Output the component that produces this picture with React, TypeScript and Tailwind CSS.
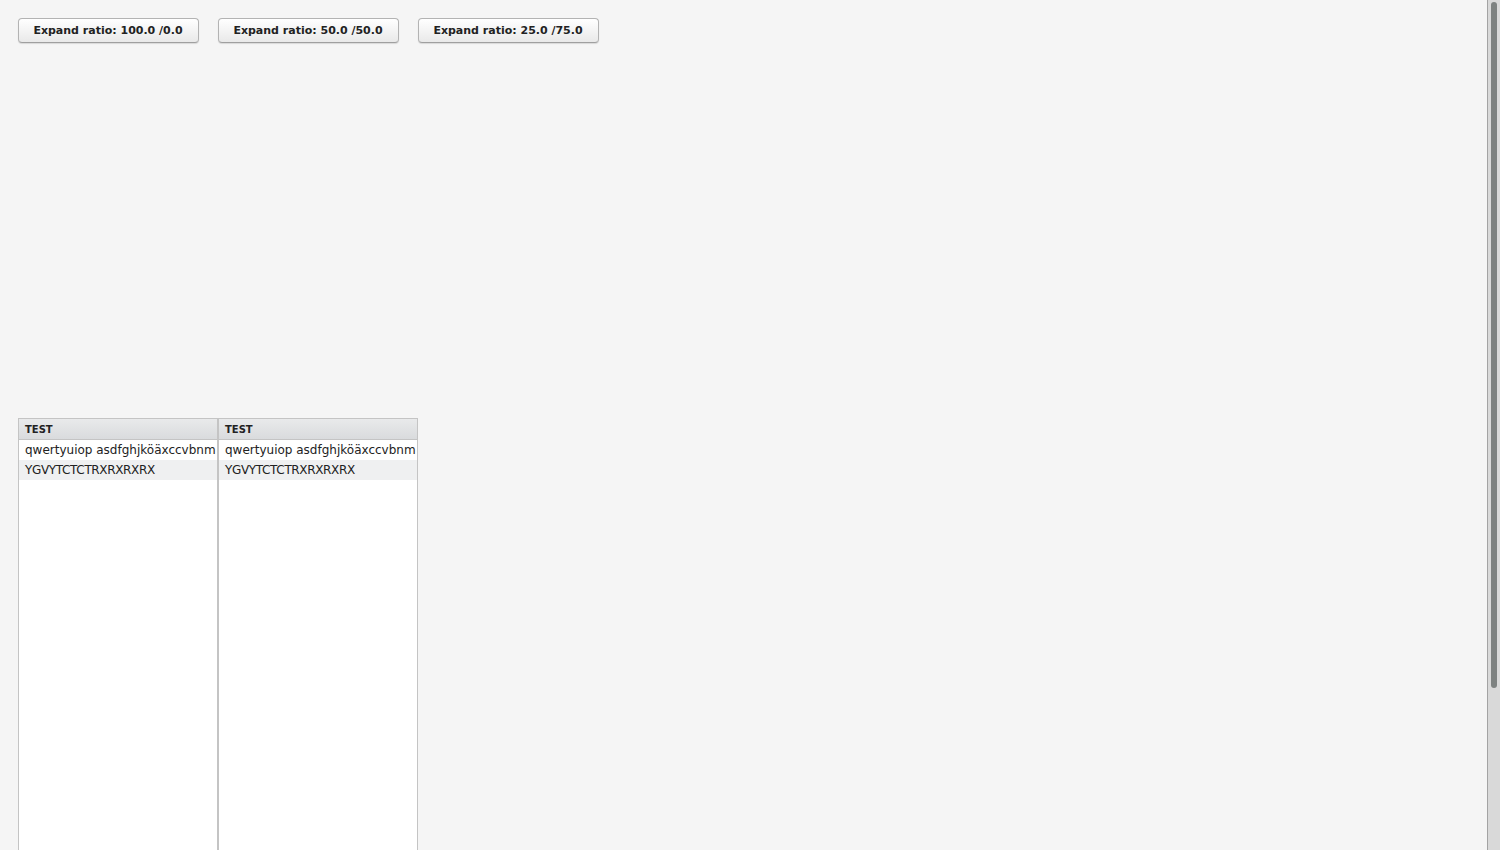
import React from "react";

const rows = [
  { text: "qwertyuiop asdfghjköäxccvbnm", cls: "bg-white" },
  { text: "YGVYTCTCTRXRXRXRX", cls: "bg-[#eff0f1] tracking-[-0.35px]" },
];

function Column({ last }: { last?: boolean }) {
  return (
    <div className={`flex flex-col ${last ? "w-[198px]" : "w-[200px] border-r-2 border-[#c4c4c4]"}`}>
      <div className="flex h-[21px] items-center border-b border-[#c4c4c4] bg-gradient-to-b from-[#e9eaeb] to-[#d9dbdd] pl-[6px] text-[10px] font-bold text-[#222]">
        TEST
      </div>
      {rows.map((r, i) => (
        <div
          key={i}
          className={`flex h-[20px] items-center overflow-hidden whitespace-nowrap pl-[6px] text-[12px] text-[#222] ${r.cls}`}
        >
          {r.text}
        </div>
      ))}
      <div className="h-[600px] bg-white" />
    </div>
  );
}

export default function App() {
  const labels = ["Expand ratio: 100.0 /0.0", "Expand ratio: 50.0 /50.0", "Expand ratio: 25.0 /75.0"];
  return (
    <div
      className="flex h-[850px] w-[1500px] overflow-hidden bg-[#f5f5f5]"
      style={{ fontFamily: '"DejaVu Sans", "Liberation Sans", sans-serif' }}
    >
      <div className="flex-1 overflow-hidden pl-[18px] pt-[18px]">
        <div className="flex gap-[19px]">
          {labels.map((l) => (
            <button
              key={l}
              className="flex h-[25px] w-[181px] items-center justify-center rounded-[4px] border border-[#b3b3b3] border-b-[#9f9f9f] bg-gradient-to-b from-[#ffffff] to-[#e9e9e9] pr-[1px] pt-[2px] text-[11px] font-bold text-[#222] shadow-[0_1px_1px_rgba(0,0,0,0.12)]"
            >
              {l}
            </button>
          ))}
        </div>
        <div className="mt-[375px] flex w-[400px] border-x border-t border-[#c4c4c4]">
          <Column />
          <Column last />
        </div>
      </div>
      <div className="flex w-[13px] justify-center border-l border-[#a3a3a3] bg-[#d9d9d9] pt-[2px]">
        <div className="h-[686px] w-[6px] rounded-full bg-[#7e8281]" />
      </div>
    </div>
  );
}
